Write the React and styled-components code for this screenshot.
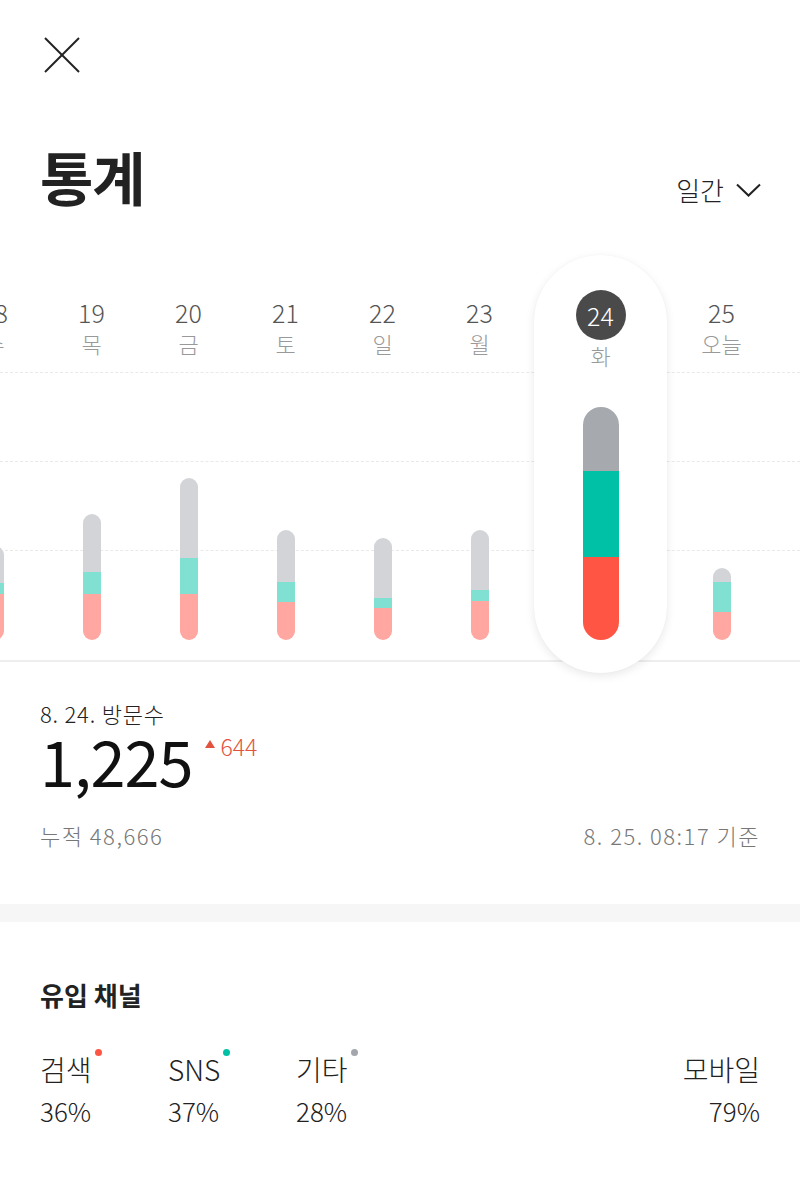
import React from 'react'
import styled, { createGlobalStyle } from 'styled-components'

const GlobalStyle = createGlobalStyle`
  html, body {
    margin: 0;
    padding: 0;
    background: #fff;
  }
  body {
    font-family: "Noto Sans CJK KR", "Noto Sans", sans-serif;
    color: #222;
    overflow-x: hidden;
  }
`

const days = [
  { date: 18, day: '수', grey: 37, teal: 11, red: 46 },
  { date: 19, day: '목', grey: 58, teal: 22, red: 46 },
  { date: 20, day: '금', grey: 80, teal: 36, red: 46 },
  { date: 21, day: '토', grey: 52, teal: 20, red: 38 },
  { date: 22, day: '일', grey: 60, teal: 10, red: 32 },
  { date: 23, day: '월', grey: 60, teal: 11, red: 39 },
  { date: 24, day: '화', grey: 64, teal: 86, red: 83, selected: true },
  { date: 25, day: '오늘', grey: 14, teal: 30, red: 28 },
]

const channels = [
  { name: '검색', value: '36%', color: '#ff5544' },
  { name: 'SNS', value: '37%', color: '#00c1a5' },
  { name: '기타', value: '28%', color: '#a3a7ad' },
]

const Page = styled('div')({
  width: '800px',
  minHeight: '1179px',
  background: '#fff',
})

const TopBar = styled('div')({
  padding: '37px 0 0 44px',
  height: '36px',
})

const TitleRow = styled('div')({
  display: 'flex',
  alignItems: 'baseline',
  justifyContent: 'space-between',
  padding: '0 39px 0 40px',
  marginTop: '75px',
})

const Title = styled('h1')({
  margin: 0,
  fontSize: '58px',
  lineHeight: '56px',
  fontWeight: 700,
  color: '#222',
  letterSpacing: '-1px',
})

const PeriodButton = styled('button')({
  display: 'flex',
  alignItems: 'center',
  gap: '12px',
  border: 0,
  background: 'none',
  padding: 0,
  fontFamily: 'inherit',
  fontSize: '26px',
  fontWeight: 300,
  lineHeight: '32px',
  color: '#222',
})

const Chart = styled('div')({
  position: 'relative',
  marginTop: '49px',
  height: '405px',
  borderBottom: '2px solid #eeeeee',
})

const GridLine = styled('div')`
  position: absolute;
  left: 0;
  right: 0;
  top: ${p => p.$top}px;
  border-top: 1px dashed #e9e9e9;
`

const Columns = styled('div')({
  position: 'relative',
  zIndex: 1,
  display: 'flex',
  marginLeft: '-54px',
  height: '418px',
})

const Column = styled('div')`
  flex: none;
  box-sizing: border-box;
  display: flex;
  flex-direction: column;
  align-items: center;
  height: 418px;
  width: ${p => (p.$selected ? '133px' : '97px')};
  margin: ${p => (p.$selected ? '0 6px' : '0')};
  padding: ${p => (p.$selected ? '35px' : '41px')} 0 33px;
  background: ${p => (p.$selected ? '#fff' : 'transparent')};
  border-radius: ${p => (p.$selected ? '67px' : '0')};
  box-shadow: ${p => (p.$selected ? '0 3px 10px rgba(0, 0, 0, 0.09), 0 0 1px rgba(0, 0, 0, 0.06)' : 'none')};
`

const DateNum = styled('div')({
  fontSize: '25px',
  fontWeight: 300,
  lineHeight: '32px',
  color: '#555',
})

const DateBadge = styled('div')({
  width: '50px',
  height: '50px',
  borderRadius: '50%',
  background: '#4a4a4a',
  color: '#fff',
  fontSize: '25px',
  fontWeight: 300,
  lineHeight: '50px',
  textAlign: 'center',
})

const DayLabel = styled('div')({
  fontSize: '22px',
  fontWeight: 300,
  lineHeight: '30px',
  color: '#999',
})

const BarArea = styled('div')({
  flex: 1,
  display: 'flex',
  alignItems: 'flex-end',
  justifyContent: 'center',
})

const Bar = styled('div')`
  display: flex;
  flex-direction: column;
  width: ${p => (p.$selected ? '36px' : '18px')};
  border-radius: ${p => (p.$selected ? '18px' : '9px')};
  overflow: hidden;
`

const Segment = styled('div')`
  background: ${p => p.$color};
`

const Stats = styled('section')({
  padding: '36px 40px 54px',
})

const StatLabel = styled('div')({
  fontSize: '22px',
  fontWeight: 300,
  lineHeight: '30px',
  letterSpacing: '0.8px',
  color: '#222',
})

const NumberRow = styled('div')({
  display: 'flex',
  alignItems: 'flex-start',
})

const BigNumber = styled('div')({
  fontSize: '63px',
  fontWeight: 400,
  lineHeight: '64px',
  color: '#111',
  letterSpacing: '-1px',
})

const Delta = styled('div')({
  display: 'flex',
  alignItems: 'center',
  gap: '5px',
  marginLeft: '13px',
  marginTop: '7px',
  fontSize: '23px',
  fontWeight: 300,
  lineHeight: '23px',
  color: '#e2533f',
})

const Triangle = styled('span')({
  width: 0,
  height: 0,
  borderLeft: '5.5px solid transparent',
  borderRight: '5.5px solid transparent',
  borderBottom: '8px solid #e2533f',
  marginTop: '-5px',
})

const FootRow = styled('div')({
  display: 'flex',
  justifyContent: 'space-between',
  marginTop: '28px',
  fontSize: '22px',
  fontWeight: 300,
  lineHeight: '30px',
  letterSpacing: '1.5px',
  color: '#777',
})

const Divider = styled('div')({
  height: '18px',
  background: '#f6f6f6',
})

const Channels = styled('section')({
  padding: '56px 40px 50px',
})

const SectionTitle = styled('h2')({
  margin: 0,
  fontSize: '26px',
  lineHeight: '34px',
  fontWeight: 700,
  color: '#222',
})

const ChannelRow = styled('div')({
  display: 'flex',
  marginTop: '39px',
})

const Channel = styled('div')`
  width: ${p => (p.$right ? 'auto' : '128px')};
  margin-left: ${p => (p.$right ? 'auto' : '0')};
  text-align: ${p => (p.$right ? 'right' : 'left')};
`

const ChannelName = styled('div')({
  display: 'inline-flex',
  alignItems: 'flex-start',
  fontSize: '28px',
  fontWeight: 300,
  lineHeight: '36px',
  color: '#222',
})

const Dot = styled('span')`
  width: 7px;
  height: 7px;
  border-radius: 50%;
  margin: -2px 0 0 3px;
  background: ${p => p.$color};
`

const ChannelValue = styled('div')({
  marginTop: '7px',
  fontSize: '26px',
  fontWeight: 300,
  lineHeight: '34px',
  color: '#222',
})

const CloseIcon = () => (
  <svg width="36" height="36" viewBox="0 0 36 36" fill="none" stroke="#222" strokeWidth="2">
    <line x1="1" y1="1" x2="35" y2="35" />
    <line x1="35" y1="1" x2="1" y2="35" />
  </svg>
)

const Chevron = () => (
  <svg width="25" height="14" viewBox="0 0 25 14" fill="none" stroke="#222" strokeWidth="2">
    <polyline points="1,1.5 12.5,12.5 24,1.5" />
  </svg>
)

const App = () => {
  return (
    <Page>
      <GlobalStyle />
      <TopBar>
        <CloseIcon />
      </TopBar>
      <TitleRow>
        <Title>통계</Title>
        <PeriodButton>
          일간
          <Chevron />
        </PeriodButton>
      </TitleRow>

      <Chart>
        <GridLine $top={117} />
        <GridLine $top={206} />
        <GridLine $top={295} />
        <Columns>
          {days.map(d => {
            const soft = !d.selected
            return (
              <Column key={d.date} $selected={d.selected}>
                {d.selected ? <DateBadge>{d.date}</DateBadge> : <DateNum>{d.date}</DateNum>}
                <DayLabel>{d.day}</DayLabel>
                <BarArea>
                  <Bar $selected={d.selected}>
                    <Segment $color={soft ? '#d3d4d8' : '#a6a9ad'} style={{ height: d.grey }} />
                    <Segment $color={soft ? '#80e0d2' : '#00c1a5'} style={{ height: d.teal }} />
                    <Segment $color={soft ? '#ffa7a0' : '#ff5544'} style={{ height: d.red }} />
                  </Bar>
                </BarArea>
              </Column>
            )
          })}
        </Columns>
      </Chart>

      <Stats>
        <StatLabel>8. 24. 방문수</StatLabel>
        <NumberRow>
          <BigNumber>1,225</BigNumber>
          <Delta>
            <Triangle />
            644
          </Delta>
        </NumberRow>
        <FootRow>
          <span>누적 48,666</span>
          <span>8. 25. 08:17 기준</span>
        </FootRow>
      </Stats>

      <Divider />

      <Channels>
        <SectionTitle>유입 채널</SectionTitle>
        <ChannelRow>
          {channels.map(c => (
            <Channel key={c.name}>
              <ChannelName>
                {c.name}
                <Dot $color={c.color} />
              </ChannelName>
              <ChannelValue>{c.value}</ChannelValue>
            </Channel>
          ))}
          <Channel $right>
            <ChannelName>모바일</ChannelName>
            <ChannelValue>79%</ChannelValue>
          </Channel>
        </ChannelRow>
      </Channels>
    </Page>
  )
}

export default App
